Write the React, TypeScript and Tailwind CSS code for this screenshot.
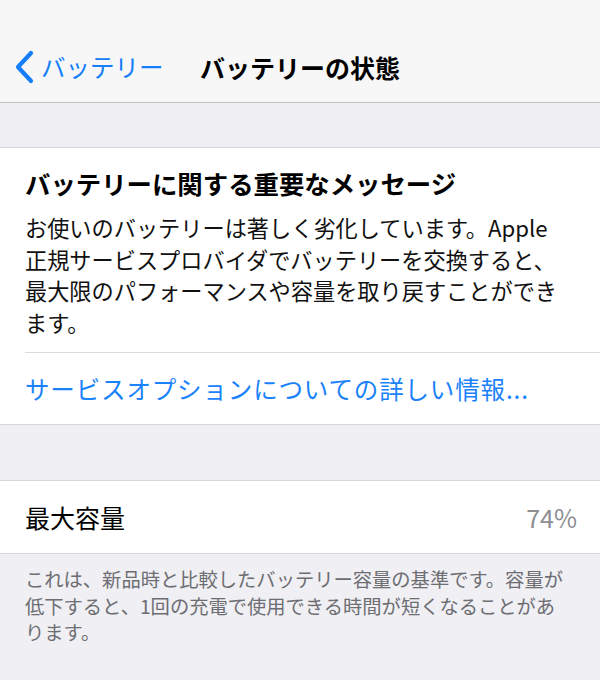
import React from "react";

const font = { fontFamily: '"Noto Sans CJK JP", "Noto Sans", sans-serif' };

function BackChevron() {
  return (
    <svg width="22" height="36" viewBox="0 0 22 36" className="shrink-0">
      <path
        d="M18 4 L5 18 L18 32"
        fill="none"
        stroke="#157efb"
        strokeWidth="4.2"
        strokeLinecap="round"
        strokeLinejoin="round"
      />
    </svg>
  );
}

export default function App() {
  return (
    <div className="w-[600px] h-[680px] bg-[#efeff4] overflow-hidden text-black" style={font}>
      {/* nav bar */}
      <div className="h-[103px] pt-[34px] bg-[#f7f7f7] border-b border-[#c4c4c8]">
        <div className="h-[66px] grid grid-cols-[1fr_auto_1fr] items-center">
          <div className="flex items-center pl-[13px] gap-[6px] text-[#157efb] text-[24.5px] leading-none">
            <BackChevron />
            <span>バッテリー</span>
          </div>
          <div className="text-[25px] font-bold leading-none">バッテリーの状態</div>
          <div />
        </div>
      </div>

      <div className="h-[44px]" />

      {/* message card */}
      <div className="bg-white border-y border-[#d6d6da]">
        <div className="pl-[25px]">
          <div className="pt-[19px] text-[25.4px] leading-[32px] font-bold">
            バッテリーに関する重要なメッセージ
          </div>
          <div className="mt-[13px] text-[22.2px] leading-[31.6px] pr-[10px] text-[#111]">
            お使いのバッテリーは著しく劣化しています。Apple
            <br />
            正規サービスプロバイダでバッテリーを交換すると、
            <br />
            最大限のパフォーマンスや容量を取り戻すことができ
            <br />
            ます。
          </div>
          <div className="mt-[14px] border-t border-[#dcdce0]" />
          <div className="h-[71px] flex items-center text-[24.5px] tracking-[0.85px] text-[#1a82fb]">
            サービスオプションについての詳しい情報...
          </div>
        </div>
      </div>

      <div className="h-[55px]" />

      {/* capacity row */}
      <div className="bg-white border-y border-[#d6d6da] h-[74px] flex items-center justify-between pl-[25px] pr-[23px]">
        <span className="text-[25px]">最大容量</span>
        <span className="text-[25px] text-[#8e8e93]">74%</span>
      </div>

      <div className="pt-[12px] pl-[25px] pr-[20px] text-[19.3px] leading-[26.5px] text-[#6d6d72]">
        これは、新品時と比較したバッテリー容量の基準です。容量が
        <br />
        低下すると、1回の充電で使用できる時間が短くなることがあ
        <br />
        ります。
      </div>
    </div>
  );
}
